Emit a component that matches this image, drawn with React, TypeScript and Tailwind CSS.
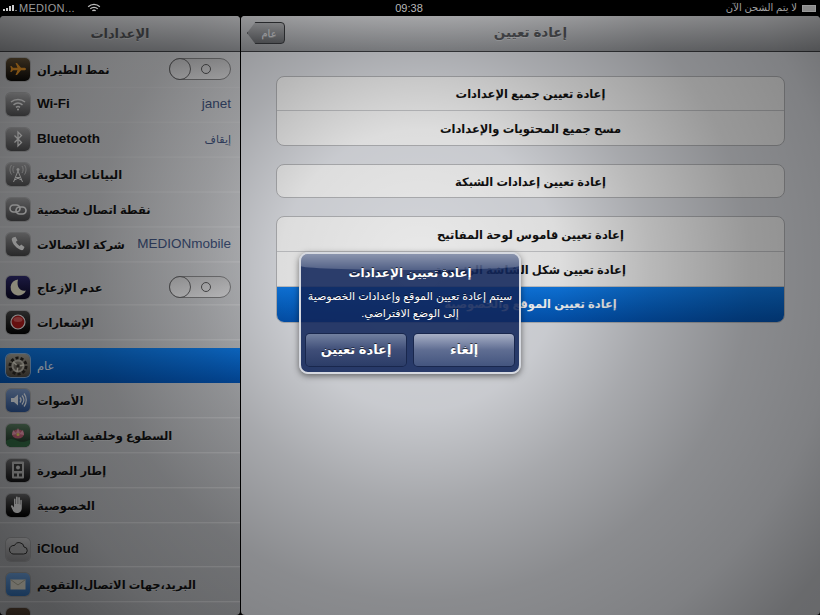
import React from "react";

const Tile = ({ cls, children }: { cls: string; children?: React.ReactNode }) => (
  <div className={`flex h-[23px] w-[24px] shrink-0 items-center justify-center overflow-hidden rounded-[5px] shadow-[0_0_0_1px_rgba(120,120,120,0.35)] ${cls}`}>
    <svg viewBox="0 0 24 24" width="24" height="24">{children}</svg>
  </div>
);

const icons: Record<string, React.ReactNode> = {
  plane: (
    <Tile cls="bg-gradient-to-b from-[#6a5638] to-[#0c0a08]">
      <path d="M20 12c0-1-1-1.300-2-1.300h-3L11 6H9.500l2 4.700H7L5.500 9H4.300l.8 3-.8 3h1.200L7 13.300h4.500L9.500 18H11l4-4.700h3c1 0 2-.3 2-1.300z" fill="#f09a28" />
    </Tile>
  ),
  wifi: (
    <Tile cls="bg-gradient-to-b from-[#b4b4b6] to-[#565658]">
      <path d="M5 10c4-3.500 10-3.500 14 0M7.500 12.800c2.800-2.300 6.200-2.300 9 0M10 15.300c1.300-1 2.700-1 4 0" stroke="#f4f4f4" strokeWidth="1.500" fill="none" />
      <circle cx="12" cy="17.500" r="1" fill="#f4f4f4" />
    </Tile>
  ),
  bt: (
    <Tile cls="bg-gradient-to-b from-[#a8a8aa] to-[#4e4e50]">
      <path d="M8.500 8.500l7 7-3.500 3.500V5l3.500 3.500-7 7" stroke="#f4f4f4" strokeWidth="1.300" fill="none" />
    </Tile>
  ),
  cell: (
    <Tile cls="bg-gradient-to-b from-[#a4a4a6] to-[#545456]">
      <path d="M12 9L7.500 20M12 9l4.500 11M9.500 15.500h5M8.500 18l6-3M15.500 18l-6-3" stroke="#eee" strokeWidth="1" fill="none" />
      <circle cx="12" cy="7.500" r="1.500" fill="#eee" />
      <path d="M8 4c-1.500 2-1.500 5 0 7M16 4c1.500 2 1.500 5 0 7M5.500 3c-2 3-2 6.500 0 9.500M18.500 3c2 3 2 6.500 0 9.500" stroke="#ddd" strokeWidth=".8" fill="none" />
    </Tile>
  ),
  link: (
    <Tile cls="bg-gradient-to-b from-[#a0a0a2] to-[#4c4c4e]">
      <rect x="4" y="8" width="10" height="7" rx="3.500" stroke="#f2f2f2" strokeWidth="1.700" fill="none" />
      <rect x="10" y="10" width="10" height="7" rx="3.500" stroke="#f2f2f2" strokeWidth="1.700" fill="none" />
    </Tile>
  ),
  phone: (
    <Tile cls="bg-gradient-to-b from-[#9c9c9e] to-[#464648]">
      <path d="M7 5.500l2.500-.8 2 3.800-1.600 1.300c.7 1.700 2 3.200 3.800 4.200l1.500-1.400 3.300 2.400-1 2.300c-.6.800-1.500 1-2.500.7C10.500 16.500 6.500 12 5.800 7.800c-.1-1 .3-1.800 1.200-2.300z" fill="#f6f6f6" />
    </Tile>
  ),
  moon: (
    <Tile cls="bg-gradient-to-b from-[#302c70] to-[#0a0824]">
      <path d="M12 4.500a8 8 0 1 0 8 11c-5 1.500-10-3-8-11z" fill="#f2eed2" />
    </Tile>
  ),
  notif: (
    <Tile cls="bg-gradient-to-b from-[#4a4a4a] to-[#050505]">
      <circle cx="12" cy="12" r="7" fill="#b01c1c" stroke="#eee" strokeWidth="1.200" />
      <ellipse cx="12" cy="9.500" rx="4.500" ry="2.500" fill="#d65a5a" />
    </Tile>
  ),
  gear: (
    <Tile cls="bg-gradient-to-b from-[#a8a498] to-[#504a42] shadow-[0_0_0_1px_rgba(220,220,220,0.6)]">
      <circle cx="12" cy="12" r="8" stroke="#2a2622" strokeWidth="3" strokeDasharray="3 2" fill="none" />
      <circle cx="12" cy="12" r="5.500" stroke="#bdb9ae" strokeWidth="2" fill="none" />
      <path d="M12 12L7 8M12 12l6-1M12 12l-1 6" stroke="#e2dece" strokeWidth="1.500" />
      <circle cx="12" cy="12" r="1.800" fill="#3a3530" />
    </Tile>
  ),
  sound: (
    <Tile cls="bg-gradient-to-b from-[#7f9ccb] to-[#2c5494]">
      <path d="M5 10h3l4-3.500v11L8 14H5z" fill="#eef3fa" />
      <path d="M14 9.500c1.300 1.500 1.300 3.500 0 5M16 7.500c2.300 2.700 2.300 6.300 0 9M18 5.500c3 3.700 3 9.300 0 13" stroke="#eef3fa" strokeWidth="1.200" fill="none" />
    </Tile>
  ),
  flower: (
    <Tile cls="bg-gradient-to-b from-[#5c8063] to-[#182c20]">
      <ellipse cx="12" cy="11" rx="6" ry="4.500" fill="#c8627a" />
      <path d="M12 5l2 5h-4zM7 7l4 4-5 1zM17 7l-4 4 5 1z" fill="#ee9db4" />
      <circle cx="12" cy="11.500" r="1.500" fill="#f0d868" />
      <path d="M0 18c5-3 7-2 12 0s8 0 12-1v7H0z" fill="#326a44" />
    </Tile>
  ),
  frame: (
    <Tile cls="bg-gradient-to-b from-[#707072] to-[#141416]">
      <rect x="6" y="3.500" width="12" height="17" rx="1" fill="#bcbcbc" />
      <rect x="8" y="6" width="8" height="7" fill="#3a3a3a" />
      <circle cx="12" cy="9.500" r="2" fill="#ccc" />
      <path d="M8 15.500h3v3H8zM13 15.500h3v3h-3z" fill="#3a3a3a" />
    </Tile>
  ),
  hand: (
    <Tile cls="bg-gradient-to-b from-[#6a6a6c] via-[#303030] to-[#020202]">
      <path d="M8 12V6.500c0-1.200 1.500-1.200 1.500 0V11h.5V4.500c0-1.200 1.700-1.200 1.700 0V11h.5V5c0-1.200 1.700-1.200 1.700 0v6.500h.4V7.500c0-1.100 1.500-1.100 1.500 0V15c0 3-2 5-5 5-2 0-3.200-1-4-2.700L5 13.500c-.5-1.200.8-1.800 1.500-1L8 14.500z" fill="#f4f4f4" />
    </Tile>
  ),
  cloud: (
    <Tile cls="bg-gradient-to-b from-[#d0d0d2] to-[#98989b]">
      <path d="M7 17h10.500a3.500 3.500 0 0 0 .5-7 5 5 0 0 0-9.500-1.500A4 4 0 0 0 7 17z" stroke="#333" strokeWidth="1" fill="#b8b8ba" />
    </Tile>
  ),
  mail: (
    <Tile cls="bg-gradient-to-b from-[#74aae8] to-[#3474bc]">
      <rect x="4.500" y="7.500" width="15" height="10" fill="#f0ecdc" />
      <path d="M4.500 7.500L12 13l7.500-5.500" stroke="#b8b4a0" fill="none" />
    </Tile>
  ),
  dark: <Tile cls="bg-gradient-to-b from-[#5a4636] to-[#2a2018]" />,
};

const Toggle = () => (
  <div className="relative flex h-[22px] w-[62px] items-center justify-end rounded-full border border-[#808082] bg-gradient-to-b from-[#c4c4c6] to-[#dedee0] pr-[19px]">
    <div className="h-[10px] w-[10px] rounded-full border-[1.500px] border-[#555557]" />
    <div className="absolute -left-px -top-px h-[22px] w-[22px] rounded-full border border-[#606062] bg-gradient-to-b from-[#c4c4c6] to-[#e0e0e2]" />
  </div>
);

type Row = { icon: string; label: string; value?: string; toggle?: boolean; latin?: boolean; arValue?: boolean };

const Item = ({ r, active }: { r: Row; active?: boolean }) => (
  <div
    className={`flex h-[35px] items-center pl-[6px] pr-[9px] ${
      active
        ? "bg-gradient-to-b from-[#0f7be8] to-[#0354b4]"
        : "border-b border-b-[#cfd0d3] shadow-[0_1px_0_rgba(255,255,255,0.12)]"
    }`}
  >
    {icons[r.icon]}
    <span
      className={`ml-[7px] leading-none ${r.latin ? "text-[13.500px]" : "mt-[3px] text-[11.500px]"} ${
        active
          ? "font-normal text-[#e6eef8]"
          : "font-bold text-[#111] [text-shadow:0_1px_0_rgba(255,255,255,0.25)]"
      }`}
    >
      {r.label}
    </span>
    <div className="flex-1" />
    {r.toggle && <Toggle />}
    {r.value && <span className={`text-[#3c4f78] ${r.arValue ? "text-[11px]" : "text-[13.500px]"}`}>{r.value}</span>}
  </div>
);

const group1: Row[] = [
  { icon: "plane", label: "نمط الطيران", toggle: true },
  { icon: "wifi", label: "Wi-Fi", value: "janet", latin: true },
  { icon: "bt", label: "Bluetooth", value: "إيقاف", latin: true, arValue: true },
  { icon: "cell", label: "البيانات الخلوية" },
  { icon: "link", label: "نقطة اتصال شخصية" },
  { icon: "phone", label: "شركة الاتصالات", value: "MEDIONmobile" },
];
const group2: Row[] = [
  { icon: "moon", label: "عدم الإزعاج", toggle: true },
  { icon: "notif", label: "الإشعارات" },
];
const group3: Row[] = [
  { icon: "gear", label: "عام" },
  { icon: "sound", label: "الأصوات" },
  { icon: "flower", label: "السطوع وخلفية الشاشة" },
  { icon: "frame", label: "إطار الصورة" },
  { icon: "hand", label: "الخصوصية" },
];
const group4: Row[] = [
  { icon: "cloud", label: "iCloud", latin: true },
  { icon: "mail", label: "البريد،جهات الاتصال،التقويم" },
  { icon: "dark", label: "" },
];

const Cell = ({ children, blue, last, h = "h-[35px]" }: { children: string; blue?: boolean; last?: boolean; h?: string }) => (
  <div
    className={`flex ${h} items-center justify-center text-[11.500px] font-bold ${
      blue
        ? "bg-gradient-to-b from-[#0f7be8] to-[#0354b4] text-white"
        : "pt-[3px] text-[#111] [text-shadow:0_1px_0_rgba(255,255,255,0.3)]"
    } ${last ? "" : "border-b border-b-[#c8c9cc]"}`}
  >
    {children}
  </div>
);

const Group = ({ children }: { children: React.ReactNode }) => (
  <div className="mx-[35px] overflow-hidden rounded-[8px] border border-[#b5b6b9] bg-[#f6f6f6]">{children}</div>
);

export default function App() {
  return (
    <div className="relative h-[615px] w-[820px] overflow-hidden bg-black font-['Liberation_Sans','DejaVu_Sans',sans-serif]">
      <div className="flex h-4 items-center justify-between px-[2px] text-[11px] leading-none text-[#b8b8b8]">
        <div className="flex w-[120px] items-center gap-[2px] text-[#9a9a9a]">
          <div className="flex items-end gap-px pl-px">
            <i className="block h-[2px] w-[2px] bg-[#ccc]" />
            <i className="block h-[3px] w-[2px] bg-[#ccc]" />
            <i className="block h-[5px] w-[2px] bg-[#ccc]" />
            <i className="block h-[6px] w-[2px] bg-[#ccc]" />
            <i className="block h-[1px] w-[2px] bg-[#777]" />
          </div>
          <span className="tracking-[0.3px]">MEDION...</span>
          <svg viewBox="0 0 16 12" width="14" height="10" className="ml-[10px]">
            <path d="M1 4.500c4-4 10-4 14 0M3.500 7c2.500-2.500 6.500-2.500 9 0M6 9.500c1-1 3-1 4 0" stroke="#bbb" strokeWidth="1.500" fill="none" />
          </svg>
        </div>
        <span className="-ml-[2px]">09:38</span>
        <div className="flex w-[120px] items-center justify-end gap-[5px] pr-[2px] text-[10px] text-[#a0a0a0]">
          <span>لا يتم الشحن الآن</span>
          <div className="h-[7px] w-[14px] border border-[#999] bg-[#888]" />
        </div>
      </div>
      <div className="flex h-[599px] gap-px">
        <aside className="w-[240px] overflow-hidden rounded-[4px] bg-gradient-to-b from-[#d2d3d6] to-[#b4b6ba]">
          <div className="flex h-[36px] items-center justify-center border-b border-b-[#3e4044] bg-gradient-to-b from-[#dfe0e3] to-[#96989c] text-[13px] font-bold text-[#505256] [text-shadow:0_1px_0_rgba(255,255,255,0.3)]">
            الإعدادات
          </div>
          {group1.map((r) => (
            <Item key={r.icon} r={r} />
          ))}
          <div className="h-[8px]" />
          {group2.map((r) => (
            <Item key={r.icon} r={r} />
          ))}
          <div className="h-[8px]" />
          {group3.map((r, i) => (
            <Item key={r.icon} r={r} active={i === 0} />
          ))}
          <div className="h-[9px]" />
          {group4.map((r) => (
            <Item key={r.icon} r={r} />
          ))}
        </aside>
        <main className="flex-1 overflow-hidden rounded-[4px] bg-[#dfe1e6]">
          <div className="relative flex h-[36px] items-center justify-center border-b border-b-[#3e4044] bg-gradient-to-b from-[#e5e6e9] to-[#9a9ca0] text-[13.500px] font-bold text-[#55575b] [text-shadow:0_1px_0_rgba(255,255,255,0.3)]">
            <div className="absolute left-[6px] top-[6px] flex h-[22px] w-[38px] items-center justify-center rounded-[4px] border border-[#3a3c40] bg-gradient-to-b from-[#bbbcbf] to-[#6a6c70] pl-[6px] text-[10px] font-normal text-[#dcdee2] [clip-path:polygon(22%_0,100%_0,100%_100%,22%_100%,0_50%)]">
              عام
            </div>
            إعادة تعيين
          </div>
          <div className="flex flex-col gap-[18px] pt-[24px]">
            <Group>
              <Cell h="h-[34px]">إعادة تعيين جميع الإعدادات</Cell>
              <Cell h="h-[34px]" last>مسح جميع المحتويات والإعدادات</Cell>
            </Group>
            <Group>
              <Cell last h="h-[32px]">إعادة تعيين إعدادات الشبكة</Cell>
            </Group>
            <Group>
              <Cell>إعادة تعيين قاموس لوحة المفاتيح</Cell>
              <Cell>إعادة تعيين شكل الشاشة الرئيسية</Cell>
              <Cell blue last>إعادة تعيين الموقع والخصوصية</Cell>
            </Group>
          </div>
        </main>
      </div>

      <div className="pointer-events-none absolute inset-x-0 bottom-0 top-4 bg-[radial-gradient(circle_at_420px_254px,rgba(0,0,0,0.05)_0px,rgba(0,0,0,0.1)_140px,rgba(0,0,0,0.25)_230px,rgba(0,0,0,0.38)_330px,rgba(0,0,0,0.43)_420px,rgba(0,0,0,0.53)_500px,rgba(0,0,0,0.58)_700px)]" />

      <div className="absolute left-[299px] top-[252px] h-[122px] w-[222px] overflow-hidden rounded-[9px] border-2 border-[#d6d9e0] bg-[rgba(17,38,90,0.88)] px-[5px] text-white shadow-[0_2px_6px_rgba(0,0,0,0.5)]">
        <div className="pointer-events-none absolute inset-x-0 top-0 h-[16px] rounded-b-[50%_4px] bg-gradient-to-b from-[rgba(255,255,255,0.45)] to-[rgba(255,255,255,0.18)]" />
        <div className="relative pt-[11px] text-center text-[12px] font-bold leading-[16px] [text-shadow:0_-1px_0_rgba(0,0,0,0.6)]">
          إعادة تعيين الإعدادات
        </div>
        <div className="relative mt-[7px] text-center text-[11px] leading-[17px] [text-shadow:0_-1px_0_rgba(0,0,0,0.6)]" dir="rtl">
          سيتم إعادة تعيين الموقع وإعدادات الخصوصية
          <br />
          إلى الوضع الافتراضي.
        </div>
        <div className="relative mt-[12px] flex justify-between text-[13px] font-bold [text-shadow:0_-1px_0_rgba(0,0,0,0.6)]">
          <div className="flex h-[32px] w-[100px] items-center justify-center rounded-[4px] bg-gradient-to-b from-[#72809f] via-[#3f4e78] to-[#2c3d68] shadow-[0_0_0_1px_rgba(10,20,50,0.5)]">
            إعادة تعيين
          </div>
          <div className="flex h-[32px] w-[100px] items-center justify-center rounded-[4px] bg-gradient-to-b from-[#a8b0c6] via-[#5f6d92] to-[#44557f] shadow-[0_0_0_1px_rgba(10,20,50,0.5)]">
            إلغاء
          </div>
        </div>
      </div>
    </div>
  );
}
